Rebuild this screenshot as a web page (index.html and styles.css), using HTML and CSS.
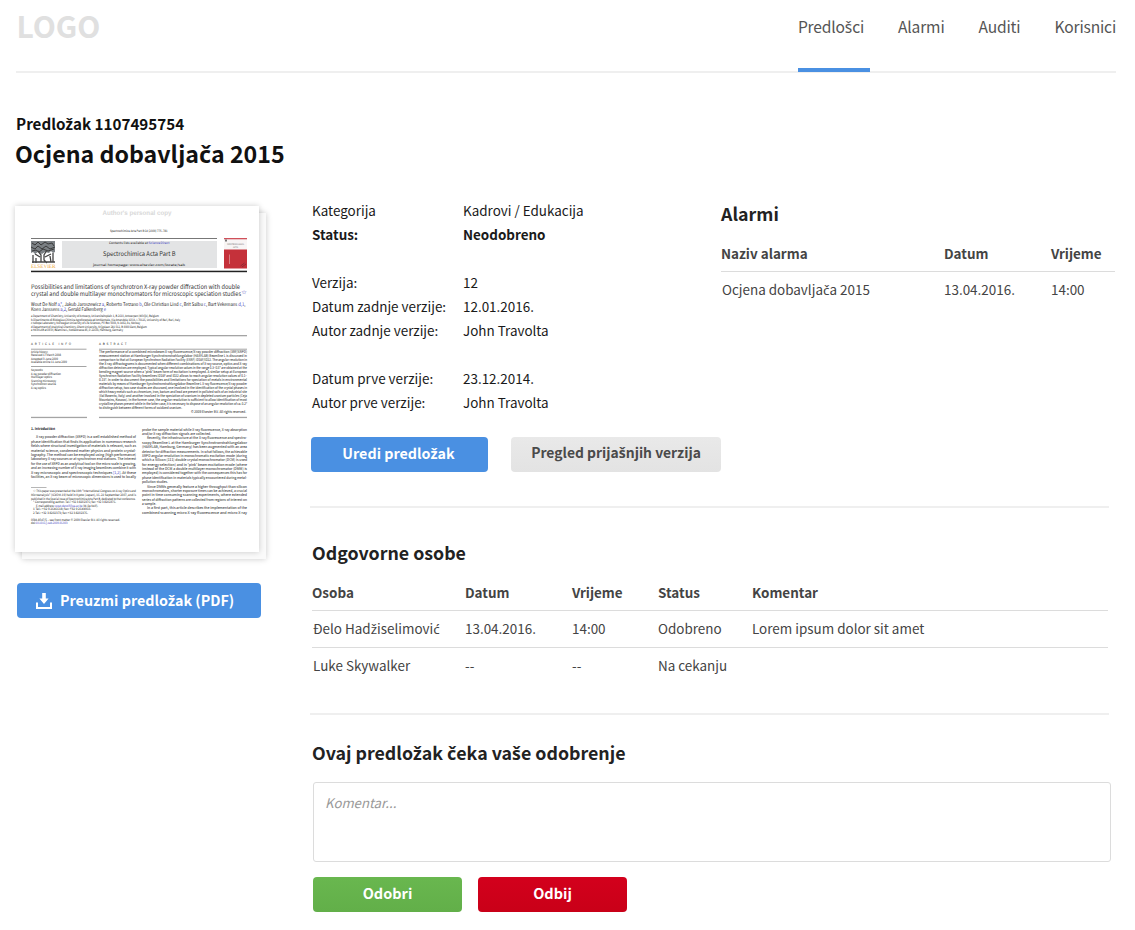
FILE: index.html
```html
<!DOCTYPE html>
<html lang="hr">
<head>
<meta charset="utf-8">
<title>Ocjena dobavljača 2015</title>
<link rel="stylesheet" href="styles.css">
</head>
<body>
<header class="header">
  <div class="logo">LOGO</div>
  <nav class="nav">
    <a class="nav-item active">Predlo<span class="d">š</span>ci</a>
    <a class="nav-item">Alarmi</a>
    <a class="nav-item">Auditi</a>
    <a class="nav-item">Korisnici</a>
  </nav>
</header>
<div class="titles">
  <div class="subtitle">Predlo<span class="d">ž</span>ak 1107495754</div>
  <h1 class="title">Ocjena dobavlja<span class="d">č</span>a 2015</h1>
</div>
<main class="layout">
  <aside class="side">
    <div class="paper">
      <svg class="page" viewBox="15 206 244 346" width="244" height="346">
        <text class="copy" x="102.500" y="214.500" textLength="69">Author's personal copy</text>
        <g class="tiny">
          <text x="110" y="232.300" textLength="57.500">Spectrochimica Acta Part B 64 (2009) 775–781</text>
        </g>
        <rect x="31" y="238" width="186" height="1" fill="#777"/>
        <rect x="62" y="241" width="155" height="27" fill="#e3e4e5"/>
        <g class="tiny">
          <text x="109" y="244.300" textLength="60.500">Contents lists available at <tspan class="link">ScienceDirect</tspan></text>
          <text x="93" y="266" textLength="92">journal homepage: www.elsevier.com/locate/sab</text>
        </g>
        <text class="journal" x="103" y="256.300" textLength="72.500">Spectrochimica Acta Part B</text>
        <g class="tree">
          <path d="M31 241h24v11l-2 1-2-2-2 2-4-1-3 2-4-2-3 2-2-2-2 1z" fill="#7b8084"/>
          <path d="M32 243l3 2 3-3 3 3 4-3 3 2 4-1 2 3M31 247l4 2 3-3 4 3 4-3 4 3 5-2M32 251l4-1 3 2 4-3 5 2 6-2" stroke="#333" fill="none" stroke-width=".9"/>
          <path d="M38 251l3 4v7M47 250l-3 5v5l3 3M35 254l5 3M51 254l-6 3M33 255v8M36 258v5M32 262h23M50 256l1 6M53 253v9" stroke="#444" fill="none" stroke-width="1.300"/>
        </g>
        <text class="brand" x="31" y="268" textLength="24.500">ELSEVIER</text>
        <rect x="224" y="238.500" width="23" height="29.500" fill="#f8f5f5"/>
        <rect x="224" y="238" width="23" height="1.300" fill="#d0505a"/>
        <rect x="224" y="249.500" width="23" height="19" fill="#c5313a"/>
        <path d="M229.500 254.500v9.500" stroke="#dfa0a4" stroke-width=".7"/>
        <path d="M240.500 266l4-3M242 267l4-3" stroke="#852832" stroke-width=".8"/>
        <rect x="225" y="239.500" width="2" height="2" fill="#777"/>
        <g class="cover"><text x="227" y="244.500" textLength="17">SPECTROCHIMICA</text><text x="233" y="247.500" textLength="5">ACTA</text></g>
        <rect x="31" y="270.700" width="216" height="1.500" fill="#222"/>
        <g class="heading">
          <text x="31" y="289" textLength="209">Possibilities and limitations of synchrotron X-ray powder diffraction with double</text>
          <text x="31" y="296.300" textLength="210">crystal and double multilayer monochromators for microscopic speciation studies</text>
          <text class="link star" x="241.500" y="294">☆</text>
        </g>
        <g class="authors">
          <text x="31" y="305.700" textLength="214.500">Wout De Nolf <tspan class="link">a,*</tspan>, Jakub Jaroszewicz <tspan class="link">a</tspan>, Roberto Terzano <tspan class="link">b</tspan>, Ole Christian Lind <tspan class="link">c</tspan>, Brit Salbu <tspan class="link">c</tspan>, Bart Vekemans <tspan class="link">d,1</tspan>,</text>
          <text x="31" y="311.300" textLength="75">Koen Janssens <tspan class="link">a,2</tspan>, Gerald Falkenberg <tspan class="link">e</tspan></text>
        </g>
        <g class="tiny">
          <text x="31" y="317" textLength="128">a Department of Chemistry, University of Antwerp, Universiteitsplein 1, B-2610, Antwerpen (Wilrijk), Belgium</text>
          <text x="31" y="320.700" textLength="149">b Dipartimento di Biologia e Chimica Agroforestale ed Ambientale, Via Amendola 165/A, I-70126, University of Bari, Bari, Italy</text>
          <text x="31" y="324.300" textLength="109">c Isotope Laboratory, Norwegian University of Life Sciences, PO Box 5003, N-1432, Ås, Norway</text>
          <text x="31" y="327.700" textLength="116">d Department of Analytical Chemistry, Ghent University, Krijgslaan 281 S12, B-9000 Gent, Belgium</text>
          <text x="31" y="331.300" textLength="92">e HASYLAB at DESY, Beamline L, Notkestrasse 85, D-22603, Hamburg, Germany</text>
        </g>
        <g fill="#a4a4a4">
          <rect x="31" y="335" width="216" height="1.300"/>
          <rect x="31" y="348.700" width="55.500" height="1"/><rect x="99" y="348.700" width="148" height="1"/>
          <rect x="31" y="366" width="55.500" height="1"/>
          <rect x="31" y="416.800" width="56" height="1.300"/><rect x="99" y="416.800" width="148" height="1.300"/>
          <rect x="31" y="487" width="15.500" height=".8"/>
        </g>
        <g class="tiny">
          <text class="spaced" x="31" y="345" textLength="40">ARTICLE INFO</text>
          <text class="spaced" x="99" y="345" textLength="27.500">ABSTRACT</text>
          <text x="31" y="352.900" textLength="17">Article history:</text>
          <text x="31" y="356.200" textLength="30">Received 17 March 2008</text>
          <text x="31" y="359.700" textLength="27">Accepted 3 June 2009</text>
          <text x="31" y="363" textLength="36">Available online 11 June 2009</text>
          <text x="31" y="370.900" textLength="12">Keywords:</text>
          <text x="31" y="374.500" textLength="30">X-ray powder diffraction</text>
          <text x="31" y="378" textLength="21">Multilayer optics</text>
          <text x="31" y="381.500" textLength="25">Scanning microscopy</text>
          <text x="31" y="385" textLength="25">Synchrotron source</text>
          <text x="31" y="388.700" textLength="15">X-ray optics</text>
        </g>
        <g class="body">
          <text x="99" y="353" textLength="148">The performance of a combined microbeam X-ray fluorescence/X-ray powder diffraction (XRF/XRPD)</text>
          <text x="99" y="357" textLength="148">measurement station at Hamburger Synchrotronstrahlungslabor (HASYLAB) Beamline L is discussed in</text>
          <text x="99" y="361" textLength="148">comparison to that at European Synchrotron Radiation Facility (ESRF) ID18F/ID22. The angular resolution in</text>
          <text x="99" y="365" textLength="148">the X-ray diffractograms is documented when different combinations of X-ray source, optics and X-ray</text>
          <text x="99" y="369" textLength="148">diffraction detectors are employed. Typical angular resolution values in the range 0.3–0.5° are obtained at the</text>
          <text x="99" y="373" textLength="148">bending magnet source when a 'pink' beam form of excitation is employed. A similar setup at European</text>
          <text x="99" y="377" textLength="148">Synchrotron Radiation Facility beamlines ID18F and ID22 allows to reach angular resolution values of 0.1–</text>
          <text x="99" y="381" textLength="148">0.15°. In order to document the possibilities and limitations for speciation of metals in environmental</text>
          <text x="99" y="385" textLength="148">materials by means of Hamburger Synchrotronstrahlungslabor Beamline L X-ray fluorescence/X-ray powder</text>
          <text x="99" y="389" textLength="148">diffraction setup, two case studies are discussed, one involved in the identification of the crystal phases in</text>
          <text x="99" y="393" textLength="148">which heavy metals such as chromium, iron, barium and lead are present in polluted soils of an industrial site</text>
          <text x="99" y="397" textLength="148">(Val Basento, Italy) and another involved in the speciation of uranium in depleted uranium particles (Ceja</text>
          <text x="99" y="401" textLength="148">Mountains, Kosovo). In the former case, the angular resolution is sufficient to allow identification of most</text>
          <text x="99" y="405" textLength="148">crystalline phases present while in the latter case, it is necessary to dispose of an angular resolution of ca. 0.2°</text>
          <text x="99" y="409" textLength="83">to distinguish between different forms of oxidized uranium.</text>
          <text x="191" y="412.700" textLength="55">© 2009 Elsevier B.V. All rights reserved.</text>
          <text x="31" y="430" textLength="24" font-weight="bold">1. Introduction</text>
          <text x="36" y="438.300" textLength="100">X-ray powder diffraction (XRPD) is a well established method of</text>
          <text x="31" y="442.700" textLength="105">phase identification that finds its application in numerous research</text>
          <text x="31" y="447.100" textLength="105">fields where structural investigation of materials is relevant, such as</text>
          <text x="31" y="451.500" textLength="105">material science, condensed matter physics and protein crystal-</text>
          <text x="31" y="455.900" textLength="105">lography. The method can be employed using (high performance)</text>
          <text x="31" y="460.300" textLength="105">laboratory X-ray sources or at synchrotron end stations. The interest</text>
          <text x="31" y="464.700" textLength="105">for the use of XRPD as an analytical tool on the micro scale is growing,</text>
          <text x="31" y="469.100" textLength="105">and an increasing number of X-ray imaging beamlines combine it with</text>
          <text x="31" y="473.500" textLength="105">X-ray microscopic and spectroscopic techniques <tspan class="link">[1,2]</tspan>. At these</text>
          <text x="31" y="477.900" textLength="105">facilities, an X-ray beam of microscopic dimensions is used to locally</text>
          <text x="142" y="430.700" textLength="105">probe the sample material while X-ray fluorescence, X-ray absorption</text>
          <text x="142" y="435.100" textLength="69">and/or X-ray diffraction signals are collected.</text>
          <text x="147" y="439.400" textLength="100">Recently, the infrastructure at the X-ray fluorescence and spectro-</text>
          <text x="142" y="443.800" textLength="105">scopy Beamline L at the Hamburger Synchrotronstrahlungslabor</text>
          <text x="142" y="448.200" textLength="105">(HASYLAB, Hamburg, Germany) has been augmented with an area</text>
          <text x="142" y="452.500" textLength="105">detector for diffraction measurements. In what follows, the achievable</text>
          <text x="142" y="456.900" textLength="105">XRPD angular resolution in monochromatic excitation mode (during</text>
          <text x="142" y="461.300" textLength="105">which a Silicon (111) double crystal monochromator (DCM) is used</text>
          <text x="142" y="465.700" textLength="105">for energy selection) and in 'pink' beam excitation mode (where</text>
          <text x="142" y="470" textLength="105">instead of the DCM a double multilayer monochromator (DMM) is</text>
          <text x="142" y="474.400" textLength="105">employed) is considered together with the consequences this has for</text>
          <text x="142" y="478.800" textLength="105">phase identification in materials typically encountered during metal-</text>
          <text x="142" y="483.200" textLength="26">pollution studies.</text>
          <text x="147" y="487.500" textLength="100">Since DMMs generally feature a higher throughput than silicon</text>
          <text x="142" y="491.900" textLength="105">monochromators, shorter exposure times can be achieved, a crucial</text>
          <text x="142" y="496.300" textLength="105">point in time consuming scanning experiments, where extended</text>
          <text x="142" y="500.600" textLength="105">series of diffraction patterns are collected from regions of interest on</text>
          <text x="142" y="505" textLength="14">a sample.</text>
          <text x="147" y="509.400" textLength="100">In a first part, this article describes the implementation of the</text>
          <text x="142" y="513.700" textLength="105">combined scanning micro X-ray fluorescence and micro X-ray</text>
        </g>
        <g class="tiny">
          <text x="33" y="492.300" textLength="103">☆ This paper was presented at the 19th "International Congress on X-ray Optics and</text>
          <text x="31" y="495.900" textLength="105">Microanalysis" (ICXOM-19) held in Kyoto (Japan), 16–21 September 2007, and is</text>
          <text x="31" y="499.500" textLength="104.500">published in the Special Issue of Spectrochimica Acta Part B, dedicated to that conference.</text>
          <text x="33" y="503.200" textLength="83">* Corresponding author. Tel.: +32 3 8202376; fax: +32 3 8202376.</text>
          <text x="36" y="506.600" textLength="62">E-mail address: <tspan class="link">wout.denolf@ua.ac.be</tspan> (W. De Nolf).</text>
          <text x="33" y="510.200" textLength="58">1 Tel.: +32 9 2646618; fax: +32 9 2644960.</text>
          <text x="33" y="513.700" textLength="55">2 Tel.: +32 3 8202373; fax: +32 3 8202376.</text>
          <text x="31" y="520.500" textLength="89">0584-8547/$ – see front matter © 2009 Elsevier B.V. All rights reserved.</text>
          <text x="31" y="524" textLength="36.500">doi:<tspan class="link">10.1016/j.sab.2009.06.003</tspan></text>
        </g>
      </svg>
    </div>
    <button class="btn blue download">
      <svg class="icon" width="16" height="16" viewBox="0 0 16 16"><path d="M6.200 0h3.600v5.500h2.800L8 11 3.400 5.500h2.800z" fill="#fff"/><path d="M1 9.500v5.500h14v-5.500" fill="none" stroke="#fff" stroke-width="2"/></svg>
      <span>Preuzmi predlo<span class="d">ž</span>ak (PDF)</span>
    </button>
  </aside>
  <div class="content">
    <div class="top">
      <section class="details">
        <dl class="facts">
          <dt>Kategorija</dt><dd>Kadrovi / Edukacija</dd>
          <dt class="strong">Status:</dt><dd class="strong">Neodobreno</dd>
          <dt class="gap">Verzija:</dt><dd class="gap">12</dd>
          <dt>Datum zadnje verzije:</dt><dd>12.01.2016.</dd>
          <dt>Autor zadnje verzije:</dt><dd>John Travolta</dd>
          <dt class="gap">Datum prve verzije:</dt><dd class="gap">23.12.2014.</dd>
          <dt>Autor prve verzije:</dt><dd>John Travolta</dd>
        </dl>
        <div class="actions">
          <button class="btn blue edit">Uredi predlo<span class="d">ž</span>ak</button>
          <button class="btn grey history">Pregled prija<span class="d">š</span>njih verzija</button>
        </div>
      </section>
      <section class="alarms">
        <h2>Alarmi</h2>
        <div class="row head"><span>Naziv alarma</span><span>Datum</span><span>Vrijeme</span></div>
        <div class="row"><span class="first">Ocjena dobavlja<span class="d">č</span>a 2015</span><span>13.04.2016.</span><span>14:00</span></div>
      </section>
    </div>
    <section class="people">
      <h2>Odgovorne osobe</h2>
      <div class="row head"><span>Osoba</span><span>Datum</span><span>Vrijeme</span><span>Status</span><span>Komentar</span></div>
      <div class="row line"><span class="first">Đelo Had<span class="d">ž</span>iselimovi<span class="d">ć</span></span><span>13.04.2016.</span><span>14:00</span><span>Odobreno</span><span>Lorem ipsum dolor sit amet</span></div>
      <div class="row"><span class="first">Luke Skywalker</span><span>--</span><span>--</span><span>Na cekanju</span><span></span></div>
    </section>
    <section class="approval">
      <h2>Ovaj predlo<span class="d">ž</span>ak <span class="d">č</span>eka va<span class="d">š</span>e odobrenje</h2>
      <textarea class="comment" placeholder="Komentar..."></textarea>
      <div class="decide">
        <button class="btn green">Odobri</button>
        <button class="btn red">Odbij</button>
      </div>
    </section>
  </div>
</main>
<script src="page.js"></script>
</body>
</html>
```
FILE: page.js
```js
document.querySelectorAll('.page text[textLength]:not(.spaced)').forEach(function (line) {
  line.setAttribute('lengthAdjust', 'spacingAndGlyphs');
});
```
FILE: styles.css
```css
* { box-sizing: border-box; margin: 0; padding: 0; }
body { width: 1135px; height: 930px; background: #fff; color: #1a1a1a; font: 13.450px/24px "Noto Sans CJK SC", "Noto Sans", sans-serif; overflow: hidden; }
/* letters with a caron or acute */
.d { font-family: "Noto Sans", sans-serif; line-height: 1; }
.header { height: 73px; margin: 0 19px 0 16px; border-bottom: 2px solid #efefef; display: flex; justify-content: space-between; }
.logo { font-size: 30px; font-weight: bold; line-height: 50px; color: #e0e0e0; padding-left: .5px; }
.nav { display: flex; gap: 34px; font-size: 15.600px; letter-spacing: -.17px; line-height: 52px; color: #555; }
.nav-item { height: 72px; }
.nav-item.active { border-bottom: 4px solid #4a90e2; padding-right: 6px; margin-right: -6px; }
.titles { padding: 38px 0 0 15px; height: 133px; }
.subtitle { font-size: 15.200px; font-weight: bold; line-height: 24px; padding-left: 1px; color: #111; }
.title { font-size: 23.200px; line-height: 36px; color: #111; }
.layout { display: grid; grid-template-columns: 296px 1fr; padding-left: 15px; }
.paper { width: 244px; height: 346px; background: #fff; box-shadow: 0 0 6px rgba(0,0,0,.2), 7px 7px 0 #fafafa, 7px 7px 6px rgba(0,0,0,.22); }
.page { display: block; background: #fff; }
.page text { font-family: "Noto Sans CJK SC", "Noto Sans", sans-serif; text-rendering: geometricPrecision; }
.page .tiny text { font-size: 3.100px; fill: #222; }
.page .cover text { font-size: 2px; fill: #555; }
.page .body text { font-size: 3.800px; fill: #111; }
.page .heading text { font-size: 6.300px; fill: #333; }
.page .heading .star { font-size: 5px; fill: #6c6cc8; }
.page .authors text { font-size: 5px; fill: #222; }
.page .copy { font: bold 6.500px "Liberation Sans", sans-serif; fill: #d8d8d8; }
.page .journal { font-size: 6.500px; fill: #333; }
.page .brand { font: 5.500px "Liberation Serif", serif; fill: #eea83c; }
.page .link { fill: #3f3fc0; }
.btn { border: 0; border-radius: 4px; height: 35px; padding-bottom: 3px; font: bold 14.300px/32px "Noto Sans CJK SC", "Noto Sans", sans-serif; color: #fff; display: block; }
.blue { background: #4a90e2; }
.grey { background: linear-gradient(#e9e9e9, #e3e3e3); color: #4a4a4a; }
.green { background: linear-gradient(#69b74f, #62af49); width: 149px; }
.red { background: linear-gradient(#d3001c, #c90018); width: 149px; }
.btn.download { width: 244px; margin: 31px 0 0 2px; display: flex; align-items: center; gap: 8px; padding: 0 0 2px 19px; }
.icon { margin-top: 2px; }
.content { padding-right: 20px; }
.top { display: flex; height: 302px; margin-left: -1px; width: 799px; border-bottom: 2px solid #efefef; }
.details { width: 411px; padding-left: 1px; margin-top: -8px; flex: none; }
.facts { display: grid; grid-template-columns: 151px 1fr; padding-left: 1px; }
.facts .gap { margin-top: 24px; }
.strong { font-weight: bold; }
.actions { display: flex; gap: 23px; margin-top: 23px; }
.actions .btn { line-height: 31px; padding-bottom: 4px; }
.edit { width: 177px; padding-right: 2px; }
.btn.history { width: 210px; font-size: 13.900px; }
.alarms { width: 394px; flex: none; margin-top: -7px; }
h2 { font-size: 17.800px; line-height: 28px; color: #222; }
.row { display: grid; height: 37px; line-height: 34px; color: #444; }
.row.head { font-weight: bold; line-height: 36px; border-bottom: 1px solid #dcdcdc; }
.row.line { border-bottom: 1px solid #dcdcdc; }
.row .first { padding-left: 1px; }
.alarms .row { grid-template-columns: 223px 107px 1fr; }
.alarms .row.head { margin-top: 8px; }
.people { margin-left: -1px; width: 799px; height: 207px; padding: 30px 1px 0 2px; border-bottom: 2px solid #efefef; }
.people .row { grid-template-columns: 153px 107px 86px 94px 1fr; }
.people .row.head { margin-top: 8px; }
.approval { padding: 23px 0 0 1px; }
.comment { display: block; width: 798px; height: 80px; margin: 16px 0 0 1px; padding: 8px 11px; border: 1px solid #dcdcdc; border-radius: 3px; resize: none; font: inherit; }
.comment::placeholder { font-style: italic; font-size: 13.200px; color: #999; }
.decide { display: flex; gap: 16px; margin: 15px 0 0 1px; }
.decide .btn { font-size: 14.500px; line-height: 31px; padding-bottom: 4px; }
```
